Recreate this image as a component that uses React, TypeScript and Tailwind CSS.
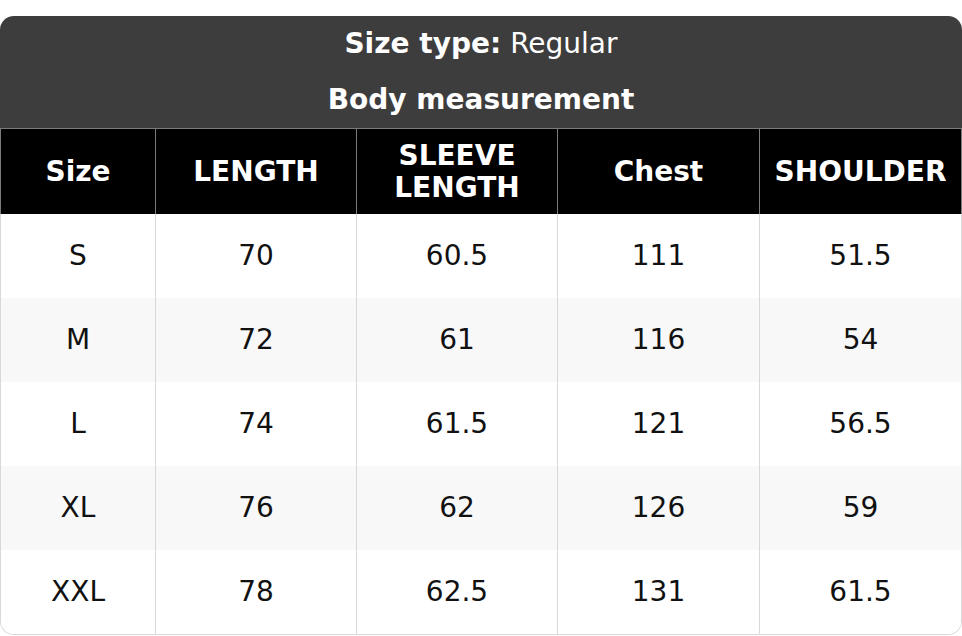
import React from "react";

const headers = ["Size", "LENGTH", "SLEEVE LENGTH", "Chest", "SHOULDER"];
const rows = [
  ["S", "70", "60.5", "111", "51.5"],
  ["M", "72", "61", "116", "54"],
  ["L", "74", "61.5", "121", "56.5"],
  ["XL", "76", "62", "126", "59"],
  ["XXL", "78", "62.5", "131", "61.5"],
];
const widths = ["w-[154px]", "w-[201px]", "w-[201px]", "w-[202px]", "w-[202px]"];

export default function App() {
  return (
    <div className="bg-white w-[962px] h-[636px] pt-4" style={{ fontFamily: '"DejaVu Sans", sans-serif' }}>
      <div className="w-[962px] flex flex-col">
        <div className="bg-[#3d3d3d] rounded-t-[14px] h-[112px] flex flex-col text-white text-[28px]">
          <div className="h-[56px] flex items-center justify-center">
            <span className="font-bold">Size type:</span>
            <span className="ml-[9px]">Regular</span>
          </div>
          <div className="h-[56px] flex items-center justify-center font-bold">Body measurement</div>
        </div>
        <div className="h-px bg-[#7a7a7a]" />
        <div className="flex bg-black h-[85px] border-x border-[#7a7a7a]">
          {headers.map((h, i) => (
            <div
              key={h}
              className={`${widths[i]} ${i > 0 ? "border-l border-[#7a7a7a]" : ""} flex items-center justify-center text-center text-white font-bold text-[28px] leading-[32px] ${i === 2 ? "px-8" : ""}`}
            >
              {h}
            </div>
          ))}
        </div>
        <div className="border-x border-b border-[#d9d9d9] rounded-b-[14px] overflow-hidden">
          {rows.map((r, ri) => (
            <div key={ri} className={`flex h-[84px] ${ri % 2 === 1 ? "bg-[#f8f8f8]" : "bg-white"}`}>
              {r.map((c, ci) => (
                <div
                  key={ci}
                  className={`${widths[ci]} ${ci > 0 ? "border-l border-[#d9d9d9]" : ""} flex items-center justify-center text-[#111] text-[28px]`}
                >
                  {c}
                </div>
              ))}
            </div>
          ))}
        </div>
      </div>
    </div>
  );
}
